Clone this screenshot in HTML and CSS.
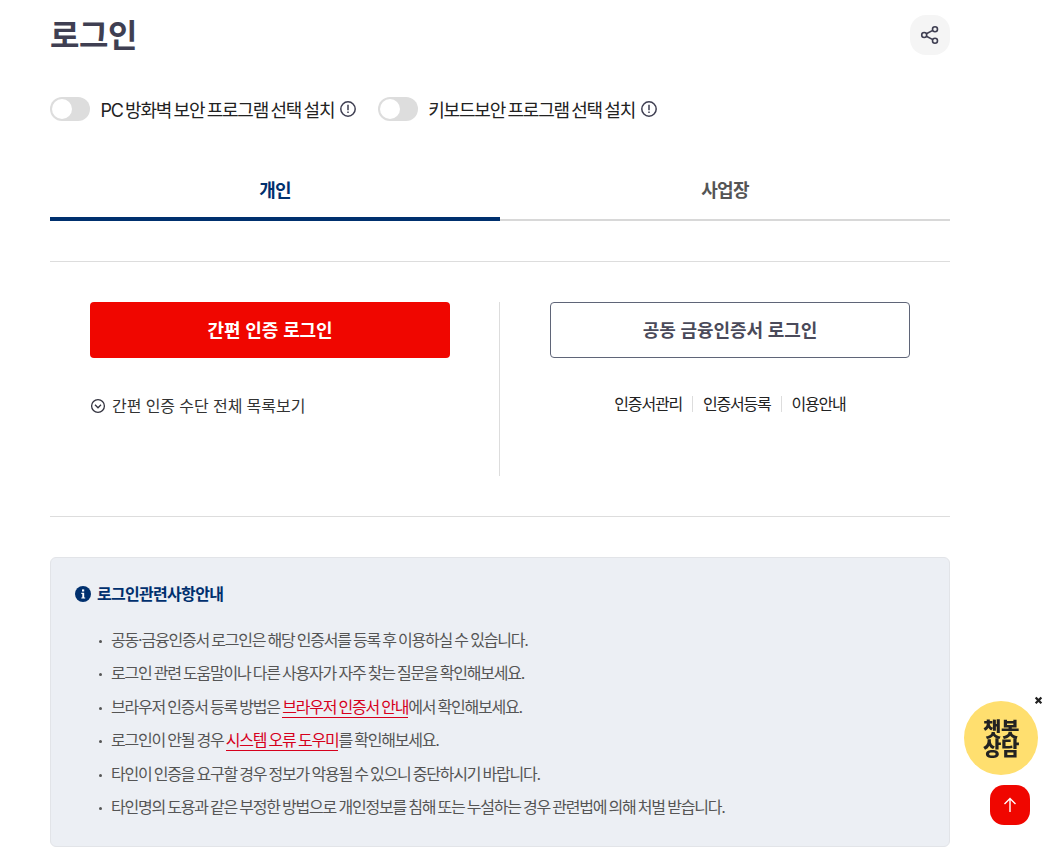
FILE: index.html
```html
<!DOCTYPE html>
<html lang="ko">
<head>
<meta charset="utf-8">
<title>로그인</title>
<link rel="stylesheet" href="styles.css">
</head>
<body>
<main class="page">
  <header class="head">
    <h1 class="title">로그인</h1>
    <button class="share" aria-label="공유">
      <svg width="20" height="20" viewBox="0 0 20 20" fill="none" stroke="#3f3f52" stroke-width="1.6"><circle cx="4.2" cy="10" r="2.5"/><circle cx="15" cy="4.2" r="2.5"/><circle cx="15" cy="15.8" r="2.5"/><path d="M6.4 8.8 12.8 5.4M6.4 11.2l6.4 3.4"/></svg>
    </button>
  </header>
  <div class="options">
    <div class="option"><span class="toggle"><span class="knob"></span></span><span class="opt-label">PC 방화벽 보안 프로그램 선택 설치</span>
      <svg class="warn" width="16" height="16" viewBox="0 0 16 16" fill="none" stroke="#3f3f52" stroke-width="1.5"><circle cx="8" cy="8" r="7.2"/><path d="M8 3.8v5.4M8 10.4v1.7"/></svg></div>
    <div class="option"><span class="toggle"><span class="knob"></span></span><span class="opt-label">키보드보안 프로그램 선택 설치</span>
      <svg class="warn" width="16" height="16" viewBox="0 0 16 16" fill="none" stroke="#3f3f52" stroke-width="1.5"><circle cx="8" cy="8" r="7.2"/><path d="M8 3.8v5.4M8 10.4v1.7"/></svg></div>
  </div>
  <nav class="tabs">
    <a class="tab active">개인</a>
    <a class="tab">사업장</a>
  </nav>
  <section class="login">
    <div class="col left">
      <button class="btn primary">간편 인증 로그인</button>
      <a class="more"><svg width="16" height="16" viewBox="0 0 16 16" fill="none" stroke="#33333f" stroke-width="1.3"><circle cx="8" cy="8" r="6.4"/><path d="M5 6.8 8 9.8l3-3"/></svg>간편 인증 수단 전체 목록보기</a>
    </div>
    <div class="col right">
      <button class="btn outline">공동 금융인증서 로그인</button>
      <ul class="links"><li>인증서관리</li><li>인증서등록</li><li>이용안내</li></ul>
    </div>
  </section>
  <section class="notice">
    <h2 class="notice-title"><svg width="16" height="16" viewBox="0 0 16 16"><circle cx="8" cy="8" r="8" fill="#00306e"/><rect x="7" y="3.4" width="2.2" height="2.1" fill="#fff"/><path d="M6.3 6.8h2.9v4.6h1v1.2H6.3v-1.2h1V8H6.3z" fill="#fff"/></svg>로그인관련사항안내</h2>
    <ul class="notes">
      <li>공동·금융인증서 로그인은 해당 인증서를 등록 후 이용하실 수 있습니다.</li>
      <li>로그인 관련 도움말이나 다른 사용자가 자주 찾는 질문을 확인해보세요.</li>
      <li>브라우저 인증서 등록 방법은 <a class="red">브라우저 인증서 안내</a>에서 확인해보세요.</li>
      <li>로그인이 안될 경우 <a class="red">시스템 오류 도우미</a>를 확인해보세요.</li>
      <li>타인이 인증을 요구할 경우 정보가 악용될 수 있으니 중단하시기 바랍니다.</li>
      <li>타인명의 도용과 같은 부정한 방법으로 개인정보를 침해 또는 누설하는 경우 관련법에 의해 처벌 받습니다.</li>
    </ul>
  </section>
</main>
<aside class="chat"><span class="chat-close">×</span><span class="chat-text">챗봇<br>상담</span></aside>
<button class="top" aria-label="맨 위로"><svg width="14" height="16" viewBox="0 0 14 16" fill="none" stroke="#fff" stroke-width="1.4"><path d="M7 15V1.5M1.5 7 7 1.5 12.5 7"/></svg></button>
</body>
</html>
```

FILE: styles.css
```css
* { box-sizing: border-box; }
html, body { margin: 0; padding: 0; background: #fff; height: 851px; overflow: hidden; }
body { font-family: Inter, "Noto Sans CJK KR", "Noto Sans", sans-serif; color: #222; }
.page { width: 900px; margin-left: 50px; }
.head { height: 70px; display: flex; justify-content: space-between; align-items: center; }
.title { margin: 2px 0 0; font-size: 32px; line-height: 62px; font-weight: 700; color: #3f3f52; letter-spacing: -0.5px; }
.share { width: 40px; height: 40px; border: 0; border-radius: 16px; background: #f5f5f5; padding: 0; display: flex; align-items: center; justify-content: center; }
.options { display: flex; gap: 22px; height: 24px; margin-top: 27px; }
.option { display: flex; align-items: center; }
.toggle { width: 40px; height: 24px; border-radius: 12px; background: #ddd; padding: 2px; margin-right: 10.5px; }
.knob { display: block; width: 20px; height: 20px; border-radius: 50%; background: #fff; }
.opt-label { font-size: 18px; letter-spacing: -1.2px; word-spacing: -1.5px; color: #222; }
.warn { margin-left: 5.5px; }
.tabs { display: flex; margin-top: 41px; height: 59px; }
.tab { flex: 1; text-align: center; font-size: 18px; font-weight: 700; letter-spacing: -0.8px; line-height: 58px; color: #555; border-bottom: 2px solid #d8d8d8; height: 59px; }
.tab.active { color: #00306e; border-bottom: 4px solid #00306e; }
.login { display: flex; margin-top: 40px; border-top: 1px solid #ddd; border-bottom: 1px solid #ddd; padding: 40px 0; height: 256px; }
.col { width: 450px; height: 174px; }
.left { padding: 0 50px 0 40px; border-right: 1px solid #ddd; }
.right { padding: 0 40px 0 50px; }
.btn { display: block; width: 360px; height: 56px; border-radius: 4px; font: 700 18px/52px "Noto Sans CJK KR", sans-serif; letter-spacing: -0.1px; padding: 0 0 2px; }
.primary { background: #f00600; border: 0; color: #fff; }
.outline { background: #fff; border: 1px solid #5f6578; color: #4a4a5a; }
.more { display: flex; align-items: center; gap: 6px; margin-top: 35px; font-size: 16px; line-height: 26px; letter-spacing: -0.03px; word-spacing: -0.2px; color: #333; }
.links { list-style: none; margin: 34px 0 0; padding: 0; display: flex; justify-content: center; font-size: 16px; line-height: 24px; letter-spacing: -1.2px; color: #222; }
.links li { padding: 0 10px; }
.links li + li { border-left: 1px solid #ddd; line-height: 16px; margin-top: 4px; height: 16px; }
.notice { margin-top: 40px; height: 290px; background: #eceff4; border: 1px solid #e2e4e8; border-radius: 6px; padding: 24px; }
.notice-title { margin: 0; display: flex; align-items: center; gap: 6px; font-size: 16px; font-weight: 700; line-height: 24px; letter-spacing: -0.7px; color: #00306e; }
.notes { list-style: none; margin: 18px 0 0; padding: 0 0 0 36px; font-size: 16px; letter-spacing: -1.22px; word-spacing: -1px; color: #555; }
.notes li { line-height: 33.4px; position: relative; }
.notes li::before { content: ""; position: absolute; left: -12px; top: 16px; width: 3px; height: 3px; border-radius: 50%; background: #555; }
.red { color: #d6001c; border-bottom: 1px solid #d6001c; }
.chat { position: fixed; left: 964px; top: 701px; width: 74px; height: 74px; border-radius: 50%; background: #ffdf6f; display: flex; align-items: center; justify-content: center; }
.chat-text { font-family: "Noto Sans CJK KR", sans-serif; font-size: 20px; font-weight: 900; line-height: 19px; text-align: center; color: #222; letter-spacing: -0.5px; }
.chat-close { position: absolute; left: 70px; top: -8px; font-size: 13px; line-height: 13px; font-weight: 900; color: #222; }
.top { position: fixed; left: 990px; top: 785px; width: 40px; height: 40px; border: 0; border-radius: 14px; background: #f00600; padding: 0; display: flex; align-items: center; justify-content: center; }
```
